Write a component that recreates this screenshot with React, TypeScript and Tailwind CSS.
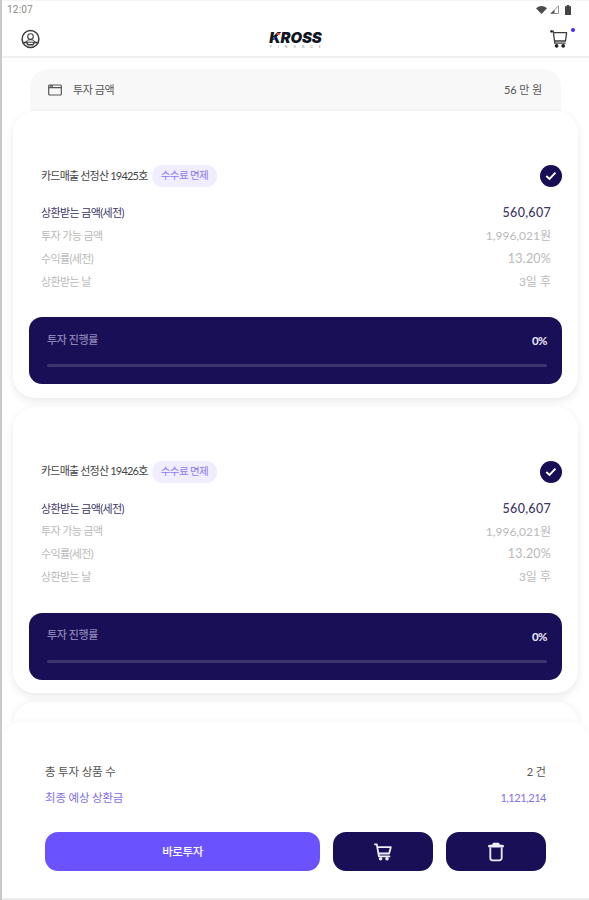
import { clsx } from "clsx";

type Product = {
  id: number;
  title: string;
  amount: string;
  available: string;
  rate: string;
  due: string;
  progress: number;
};

const products: Product[] = [
  {
    id: 19425,
    title: "카드매출 선정산 19425호",
    amount: "560,607",
    available: "1,996,021원",
    rate: "13.20%",
    due: "3일 후",
    progress: 0,
  },
  {
    id: 19426,
    title: "카드매출 선정산 19426호",
    amount: "560,607",
    available: "1,996,021원",
    rate: "13.20%",
    due: "3일 후",
    progress: 0,
  },
];

function HeaderCartIcon() {
  return (
    <svg className="h-[18px] w-[18px]" viewBox="0 0 18 18" fill="none" stroke="#3c3c3c">
      <path d="M1 1.2h2.2l1.6 11.9h10.8" strokeWidth="1.3" />
      <path d="M3.6 2.7h13l-1.1 8.3H4.7" strokeWidth="1.3" strokeLinejoin="round" />
      <circle cx="1.4" cy="1.4" r="1.2" fill="#222" stroke="none" />
      <circle cx="6.6" cy="15.8" r="1.9" fill="#222" stroke="none" />
      <circle cx="13.2" cy="15.8" r="1.9" fill="#222" stroke="none" />
    </svg>
  );
}

function CartIcon() {
  return (
    <svg className="h-[18px] w-[18px]" viewBox="0 0 18 18" fill="none" stroke="currentColor">
      <path
        d="M1 1.4h1.8l2.1 12h10.6M3.5 4.2h13.300l-1.700 6.300H5"
        strokeWidth="1.8"
        strokeLinecap="round"
        strokeLinejoin="round"
      />
      <circle cx="6.6" cy="15.7" r="1.8" fill="currentColor" stroke="none" />
      <circle cx="13" cy="15.7" r="1.8" fill="currentColor" stroke="none" />
    </svg>
  );
}

function TrashIcon() {
  return (
    <svg className="h-5 w-4" viewBox="0 0 16 20" fill="none" stroke="currentColor">
      <path d="M1.5 4.2h13" strokeWidth="2.8" strokeLinecap="round" />
      <path d="M4.2 3.5 5.2 1h5.600l1 2.500z" fill="currentColor" strokeWidth="0.6" />
      <path
        d="M2.3 5.500v10.500a2.400 2.400 0 0 0 2.400 2.400h6.600a2.400 2.400 0 0 0 2.400-2.400V5.500"
        strokeWidth="1.8"
      />
    </svg>
  );
}

function StatusBar() {
  return (
    <div className="flex h-[18px] items-center justify-between border-t border-[#f5f5f5] pl-[5px] pr-[18px] text-[#8a8a8a]">
      <span className="font-[Roboto] text-[10px] leading-none tracking-[0.2px]">12:07</span>
      <div className="flex items-center gap-[3px]">
        <svg className="h-2 w-[11px]" viewBox="0 0 11 8" fill="#4d4d4d">
          <path d="M0 2.2Q5.5-2 11 2.2L5.5 8z" />
        </svg>
        <svg className="h-[9px] w-[9px]" viewBox="0 0 9 9" fill="none" stroke="#8a8a8a">
          <path d="M.8 8.5 8.5.8v7.7z" strokeWidth=".9" />
          <path d="M.8 8.5 4.5 4.8v3.7z" fill="#555" stroke="none" />
        </svg>
        <svg className="ml-[3px] h-[10px] w-[6px]" viewBox="0 0 6 10" fill="#444">
          <path d="M0 1.2h1.7V0h2.6v1.200H6V10H0z" />
        </svg>
      </div>
    </div>
  );
}

function Header() {
  return (
    <header className="flex h-10 items-center justify-between border-b-2 border-[#efefef] pl-[18px] pr-[14px] pt-[4px]">
      <svg className="h-5 w-5" viewBox="0 0 20 20" fill="none" stroke="#3c3c3c">
        <circle cx="10.500" cy="10" r="8.4" strokeWidth="1.5" />
        <circle cx="10.500" cy="7.6" r="2.8" strokeWidth="1.1" />
        <path d="M5.700 13.200c1-1.800 2.600-2.500 4.800-2.500s3.800.7 4.800 2.500z" strokeWidth="1" />
        <path d="M3.500 13.600h3.200l1.400 2.200h4.800l1.400-2.200h3.200" strokeWidth="1.5" />
      </svg>
      <div className="flex flex-col items-center pl-px pt-[2px]">
        <div className="relative font-[Inter] text-[15px] font-black italic leading-[14px] tracking-[-0.1px] text-[#111525]">
          KROSS
          <span className="absolute left-[8px] top-[2px] h-[2px] w-[3px] -skew-x-12 bg-[#e0523f]" />
          <span className="absolute left-[4px] top-[6px] h-[3px] w-[2px] bg-[#2a60a8]" />
        </div>
        <div className="flex w-[51px] justify-between pt-px font-[Inter] text-[3.5px] leading-[3px] text-[#888]">
          {"FINANCE".split("").map((letter, i) => (
            <span key={i}>{letter}</span>
          ))}
        </div>
      </div>
      <div className="relative pr-[7px]">
        <HeaderCartIcon />
        <span className="absolute -top-[2px] right-0 h-1 w-1 rounded-full bg-[#4a25f0]" />
      </div>
    </header>
  );
}

type InfoRowProps = {
  label: string;
  value: string;
  className?: string;
  valueClassName?: string;
};

function InfoRow({ label, value, className, valueClassName = "text-[12px]" }: InfoRowProps) {
  return (
    <div className={clsx("flex h-[22.8px] items-center justify-between", className)}>
      <span className="text-[11px] tracking-[-0.62px]">{label}</span>
      <span className={valueClassName}>{value}</span>
    </div>
  );
}

function ProductCard({ product }: { product: Product }) {
  return (
    <section className="h-[286.5px] rounded-[22px] bg-white px-4 pt-[53px] shadow-[0_3px_9px_rgba(0,0,0,0.09)]">
      <div className="flex h-6 items-center pl-3">
        <h2 className="w-[111px] whitespace-nowrap text-[11px] tracking-[-0.8px] text-[#444]">
          {product.title}
        </h2>
        <span className="flex h-[22px] w-[65px] items-center justify-center rounded-[10px] bg-[#f0edff] text-[10.5px] tracking-[-0.6px] text-[#8d79f0]">
          수수료 면제
        </span>
        <span className="ml-auto flex h-[22px] w-[22px] items-center justify-center rounded-full bg-[#170e55]">
          <svg className="h-[10px] w-3" viewBox="0 0 12 10" fill="none" stroke="white">
            <path d="m1.3 5 3.2 3 6-6.3" strokeWidth="1.9" />
          </svg>
        </span>
      </div>

      <div className="mt-[14px] pl-3 pr-[11px] text-[#b9b9b9]">
        <InfoRow
          label="상환받는 금액(세전)"
          value={product.amount}
          className="text-[#3d3565]"
          valueClassName="text-[12.5px] font-medium tracking-[0.3px]"
        />
        <InfoRow label="투자 가능 금액" value={product.available} />
        <InfoRow
          label="수익률(세전)"
          value={product.rate}
          valueClassName="text-[12.5px] tracking-[0.2px]"
        />
        <InfoRow label="상환받는 날" value={product.due} />
      </div>

      <div className="mt-6 h-[67px] rounded-[13px] bg-[#190f57] pl-[18px] pr-[15px] pt-[13px]">
        <div className="flex h-5 items-center justify-between">
          <span className="text-[11px] font-medium tracking-[-0.4px] text-[#8b84b4]">투자 진행률</span>
          <span className="pt-px text-[11.5px] font-bold tracking-[-0.5px] text-[#eeecff]">
            {product.progress}%
          </span>
        </div>
        <div className="mt-[14px] h-[3px] rounded-full bg-[#3c336f]">
          <div className="h-full rounded-full bg-white" style={{ width: `${product.progress}%` }} />
        </div>
      </div>
    </section>
  );
}

function BottomSheet() {
  return (
    <footer className="relative flex-1 rounded-t-[20px] border-b-2 border-[#ececec] bg-white px-[43px] pt-[37px] shadow-[0_-2px_5px_rgba(0,0,0,0.03)]">
      <div className="flex h-[26px] items-center justify-between text-[11.5px] text-[#555]">
        <span className="tracking-[-0.2px]">총 투자 상품 수</span>
        <span className="text-[11px]">2 건</span>
      </div>
      <div className="flex h-[26px] items-center justify-between text-[11.5px] text-[#8370e6]">
        <span className="tracking-[-0.2px]">최종 예상 상환금</span>
        <span className="text-[11px] tracking-[-0.45px]">1,121,214</span>
      </div>
      <div className="mt-[21px] flex h-[39px] gap-[13px]">
        <button className="w-[275px] rounded-[13px] bg-[#6a53ff] text-[11.5px] font-medium tracking-[-0.4px] text-white">
          바로투자
        </button>
        <button className="flex flex-1 items-center justify-center rounded-[13px] bg-[#190f57] text-[#f0edff]">
          <CartIcon />
        </button>
        <button className="flex flex-1 items-center justify-center rounded-[13px] bg-[#190f57] text-[#f0edff]">
          <TrashIcon />
        </button>
      </div>
    </footer>
  );
}

export default function App() {
  return (
    <div className="flex h-[900px] w-[589px] flex-col overflow-hidden border-l-2 border-[#c9c9c9] bg-white font-[Lato,'Noto_Sans_CJK_KR',sans-serif]">
      <StatusBar />
      <Header />

      <main className="h-[664px] shrink-0 overflow-hidden px-[11px] pt-[11px]">
        <div className="mx-[17px] flex h-[42px] items-center rounded-t-[18px] bg-[#f8f8f8] px-[18px] text-[#555]">
          <svg className="h-3 w-[14px]" viewBox="0 0 14 12" fill="none" stroke="#555">
            <rect x=".7" y="1" width="12.6" height="10" rx="1" strokeWidth="1.2" />
            <path d="M1 3.6h12M2 2h3" strokeWidth="1.3" />
          </svg>
          <span className="ml-[11px] text-[11px] tracking-[-0.4px]">투자 금액</span>
          <span className="ml-auto pr-px text-[11px] tracking-[-0.1px]">56 만 원</span>
        </div>
        <div className="flex flex-col gap-[9px]">
          {products.map((product) => (
            <ProductCard key={product.id} product={product} />
          ))}
          {/* top edge of the next card, cut off by the sheet */}
          <div className="h-10 rounded-t-[22px] bg-white shadow-[0_0_8px_rgba(0,0,0,0.07)]" />
        </div>
      </main>

      <BottomSheet />
    </div>
  );
}
